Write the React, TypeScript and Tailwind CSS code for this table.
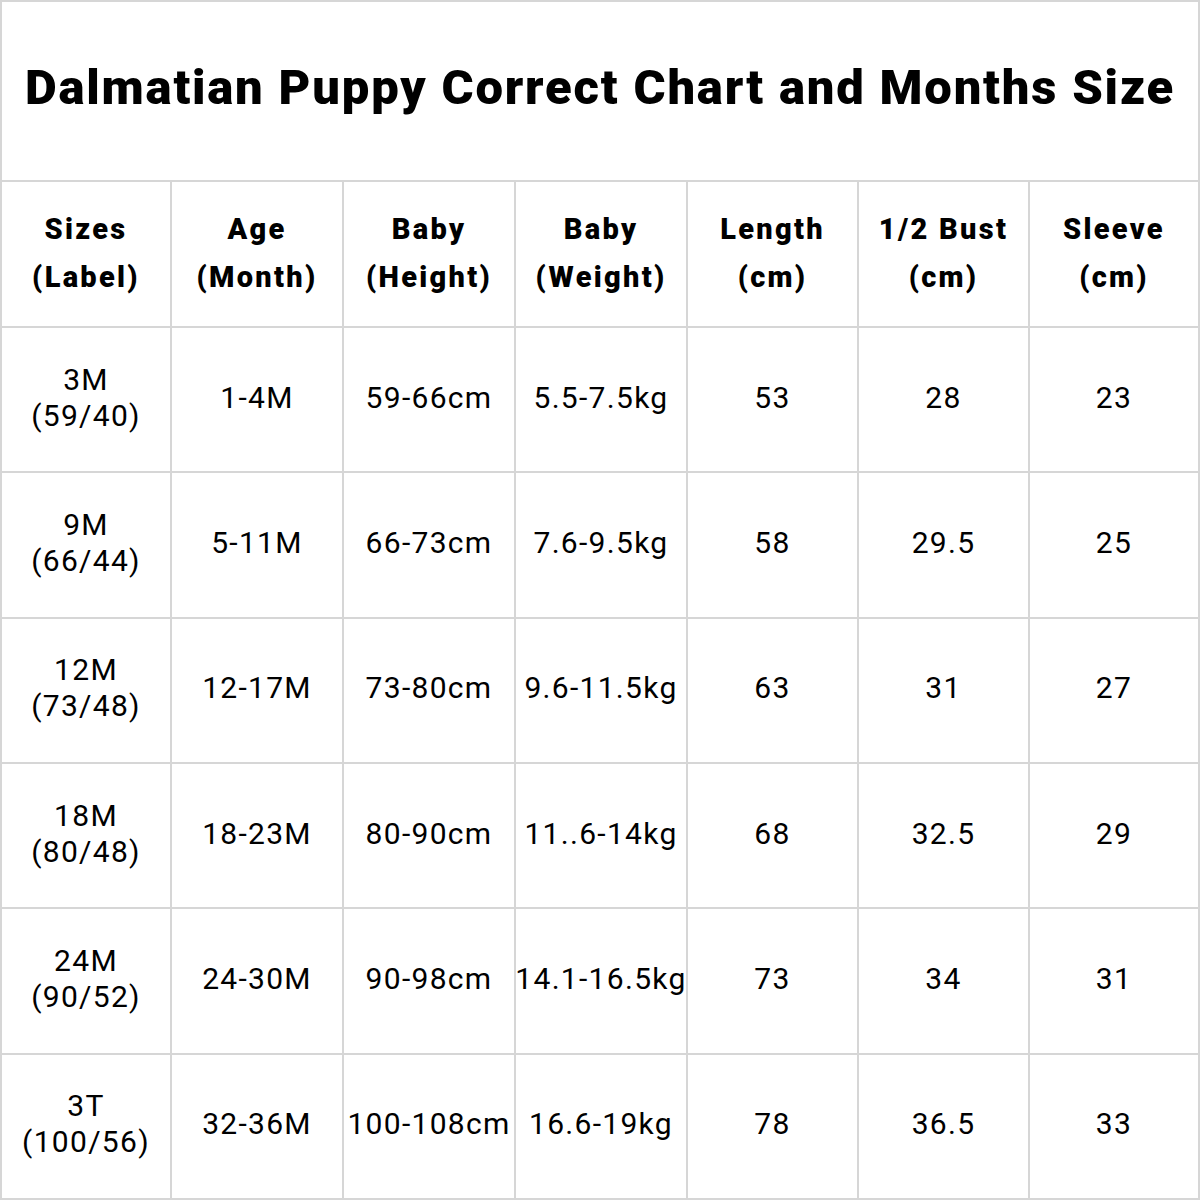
import React from "react";

const headers: [string, string][] = [
  ["Sizes", "(Label)"],
  ["Age", "(Month)"],
  ["Baby", "(Height)"],
  ["Baby", "(Weight)"],
  ["Length", "(cm)"],
  ["1/2 Bust", "(cm)"],
  ["Sleeve", "(cm)"],
];

const rows: string[][] = [
  ["3M|(59/40)", "1-4M", "59-66cm", "5.5-7.5kg", "53", "28", "23"],
  ["9M|(66/44)", "5-11M", "66-73cm", "7.6-9.5kg", "58", "29.5", "25"],
  ["12M|(73/48)", "12-17M", "73-80cm", "9.6-11.5kg", "63", "31", "27"],
  ["18M|(80/48)", "18-23M", "80-90cm", "11..6-14kg", "68", "32.5", "29"],
  ["24M|(90/52)", "24-30M", "90-98cm", "14.1-16.5kg", "73", "34", "31"],
  ["3T|(100/56)", "32-36M", "100-108cm", "16.6-19kg", "78", "36.5", "33"],
];

export default function App() {
  return (
    <div
      className="w-[1200px] h-[1200px] bg-white text-black box-border border-l-2 border-t-2 border-[#d6d6d6] flex flex-col"
      style={{ fontFamily: "Roboto, 'Liberation Sans', sans-serif" }}
    >
      <div className="h-[180px] border-r-2 border-b-2 border-[#d6d6d6] flex items-center justify-center">
        <h1 className="text-[49px] font-black tracking-[1.8px] leading-none pb-[8px] whitespace-nowrap">
          Dalmatian Puppy Correct Chart and Months Size
        </h1>
      </div>
      <div className="grid grid-cols-[170px_172px_172px_172px_171px_171px_170px] h-[146px]">
        {headers.map(([a, b], i) => (
          <div
            key={i}
            className="border-r-2 border-b-2 border-[#d6d6d6] flex flex-col items-center justify-center text-[29px] font-black leading-[48px] tracking-[2.3px] pb-[2px] whitespace-nowrap"
          >
            <span>{a}</span>
            <span>{b}</span>
          </div>
        ))}
      </div>
      {rows.map((r, ri) => (
        <div
          key={ri}
          className="grid grid-cols-[170px_172px_172px_172px_171px_171px_170px] flex-1"
        >
          {r.map((c, ci) => (
            <div
              key={ci}
              className="border-r-2 border-b-2 border-[#d6d6d6] flex flex-col items-center justify-center text-[30px] leading-[36px] tracking-[1.3px] pb-[4px] whitespace-nowrap"
            >
              {c.split("|").map((t, k) => (
                <span key={k}>{t}</span>
              ))}
            </div>
          ))}
        </div>
      ))}
    </div>
  );
}
